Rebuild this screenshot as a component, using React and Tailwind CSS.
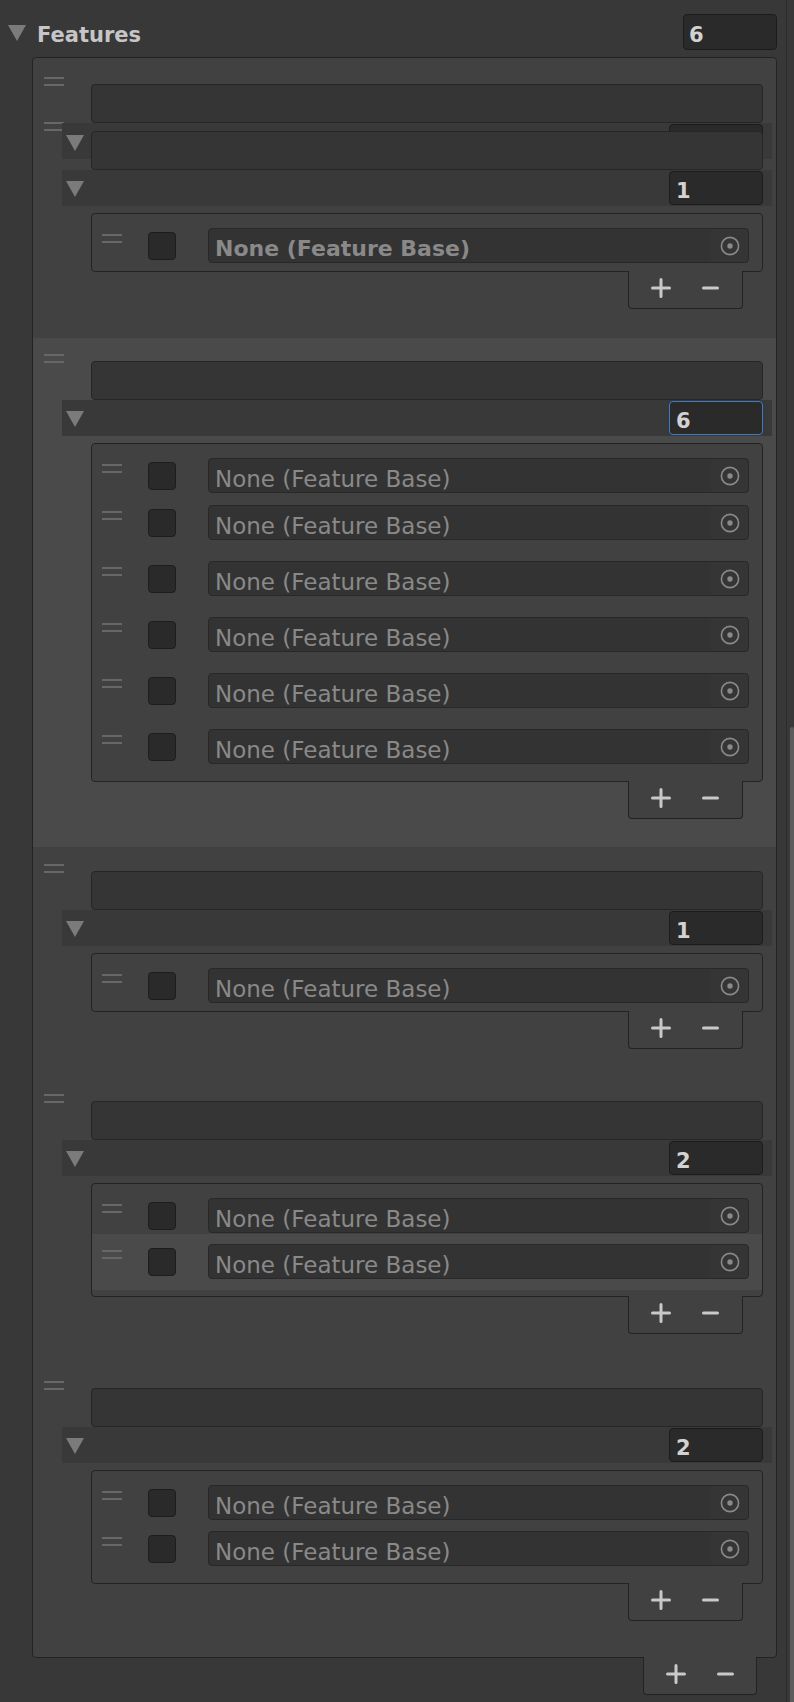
import React from "react";

const Tri = ({ className = "" }) => (
  <svg className={className} width="18" height="16" viewBox="0 0 18 16">
    <polygon points="0,0 18,0 9,16" fill="#7b7b7b" />
  </svg>
);

const Handle = ({ className = "" }) => (
  <div className={`w-[20px] flex flex-col gap-[5px] shrink-0 ${className}`}>
    <div className="h-[2px] bg-[#676767]" />
    <div className="h-[2px] bg-[#676767]" />
  </div>
);

const Plus = () => (
  <svg width="20" height="20" viewBox="0 0 20 20">
    <path d="M10 1.5V18.5M1.5 10H18.5" stroke="#c9c9c9" strokeWidth="3" strokeLinecap="round" />
  </svg>
);
const Minus = () => (
  <svg width="17" height="20" viewBox="0 0 17 20">
    <path d="M1.5 10H15.5" stroke="#c9c9c9" strokeWidth="3" strokeLinecap="round" />
  </svg>
);

const Picker = () => (
  <svg width="20" height="20" viewBox="0 0 20 20">
    <circle cx="10" cy="10" r="8.6" fill="none" stroke="#8a8a8a" strokeWidth="1.6" />
    <circle cx="10" cy="10" r="2.7" fill="#8a8a8a" />
  </svg>
);

const Footer = ({ className = "" }) => (
  <div
    className={`relative z-10 mt-[-1px] h-[38px] bg-[#414141] border-x border-b border-[#232323] rounded-b-[4px] flex items-center pb-[3px] ${className}`}
  >
    <div className="ml-[22px] flex"><Plus /></div>
    <div className="ml-[31px] flex"><Minus /></div>
  </div>
);

const Row = ({ bold = false }) => (
  <div className="flex items-start h-[35px] pl-[10px] pr-[13px]">
    <Handle className="mt-[6px]" />
    <div className="ml-[26px] mt-[4px] w-[28px] h-[28px] bg-[#2a2a2a] border border-[#1d1d1d] rounded-[4px] shrink-0" />
    <div className="ml-[32px] flex-1 h-[35px] box-border bg-[#333333] border border-[#282828] rounded-[4px] flex">
      <div
        className={`flex-1 pl-[6px] leading-[25px] text-[#898989] whitespace-nowrap overflow-hidden ${
          bold ? "pt-[7px] font-bold text-[22px]" : "pt-[8px] text-[23px]"
        }`}
      >
        None (Feature Base)
      </div>
      <div className="w-[37px] h-full flex items-center justify-center bg-[#353535] rounded-r-[4px]">
        <Picker />
      </div>
    </div>
  </div>
);

const CountField = ({ value, focus = false, className = "" }) => (
  <div
    className={`w-[94px] h-[34px] box-border bg-[#2a2a2a] rounded-[4px] border pl-[6px] pt-[7px] leading-[24px] text-[21px] font-bold text-[#d2d2d2] ${
      focus ? "border-[#3b7bc6]" : "border-[#1c1c1c]"
    } ${className}`}
  >
    {value}
  </div>
);

const NameField = ({ className = "" }) => (
  <div
    className={`ml-[29px] mr-[9px] h-[39px] box-border bg-[#353535] border border-[#262626] rounded-[4px] ${className}`}
  />
);

const Foldout = ({ count, focus = false }) => (
  <div className="h-[36px] bg-[#393939] flex items-start">
    <Tri className="ml-[4px] mt-[11px]" />
    <CountField value={count} focus={focus} className="ml-auto mr-[9px] mt-[1px]" />
  </div>
);

const InnerBox = ({ className = "", children }) => (
  <div
    className={`mt-[7px] ml-[29px] mr-[9px] box-border bg-[#414141] border border-[#232323] rounded-[4px] overflow-hidden ${className}`}
  >
    {children}
  </div>
);

export default function App() {
  return (
    <div className="w-[794px] h-[1702px] bg-[#383838] flex font-['DejaVu_Sans',sans-serif] overflow-hidden">
      <div className="w-[786px] shrink-0">
        {/* header */}
        <div className="h-[57px] flex items-start">
          <Tri className="ml-[8px] mt-[25px]" />
          <div className="ml-[11px] mt-[23px] leading-[24px] text-[21px] font-bold text-[#c6c6c6]">Features</div>
          <div className="ml-auto mr-[9px] mt-[14px] w-[94px] h-[36px] box-border bg-[#2a2a2a] border border-[#1c1c1c] rounded-[4px] pl-[5px] pt-[8px] leading-[24px] text-[21px] font-bold text-[#d2d2d2]">
            6
          </div>
        </div>

        {/* container */}
        <div className="ml-[32px] w-[745px] box-border bg-[#414141] border border-[#232323] rounded-[4px]">
          {/* element 0 (overlapping) */}
          <div className="flex pr-[4px] pt-[26px] pb-[29px]">
            <div className="w-[29px] shrink-0 pl-[11px]">
              <Handle className="mt-[-7px]" />
              <Handle className="mt-[36px]" />
            </div>
            <div className="flex-1">
              <NameField />
              <div className="h-[36px] bg-[#393939] flex items-start">
                <Tri className="ml-[4px] mt-[12px]" />
                <CountField value="" className="ml-auto mr-[9px] mt-[1px]" />
              </div>
              <NameField className="relative z-10 mt-[-28px]" />
              <Foldout count="1" />
              <InnerBox className="h-[59px]">
                <div className="mt-[14px]">
                  <Row bold />
                </div>
              </InnerBox>
              <Footer className="ml-auto mr-[29px] w-[115px]" />
            </div>
          </div>

          {/* element 1 (selected) */}
          <div className="flex pr-[4px] pt-[23px] pb-[28px] bg-[#4a4a4a]">
            <div className="w-[29px] shrink-0 pl-[11px]">
              <Handle className="mt-[-7px]" />
            </div>
            <div className="flex-1">
              <NameField />
              <Foldout count="6" focus />
              <InnerBox className="h-[339px]">
                <div className="mt-[14px]"><Row /></div>
                <div className="mt-[12px]"><Row /></div>
                <div className="mt-[21px]"><Row /></div>
                <div className="mt-[21px]"><Row /></div>
                <div className="mt-[21px]"><Row /></div>
                <div className="mt-[21px]"><Row /></div>
              </InnerBox>
              <Footer className="ml-auto mr-[29px] w-[115px]" />
            </div>
          </div>

          {/* element 2 */}
          <div className="flex pr-[4px] pt-[24px] pb-[28px]">
            <div className="w-[29px] shrink-0 pl-[11px]">
              <Handle className="mt-[-7px]" />
            </div>
            <div className="flex-1">
              <NameField />
              <Foldout count="1" />
              <InnerBox className="h-[59px]">
                <div className="mt-[14px]"><Row /></div>
              </InnerBox>
              <Footer className="ml-auto mr-[29px] w-[115px]" />
            </div>
          </div>

          {/* element 3 */}
          <div className="flex pr-[4px] pt-[24px] pb-[28px]">
            <div className="w-[29px] shrink-0 pl-[11px]">
              <Handle className="mt-[-7px]" />
            </div>
            <div className="flex-1">
              <NameField />
              <Foldout count="2" />
              <InnerBox className="h-[114px]">
                <div className="mt-[14px]"><Row /></div>
                <div className="mt-[1px] pt-[10px] pb-[11px] bg-[#4a4a4a]"><Row /></div>
              </InnerBox>
              <Footer className="ml-auto mr-[29px] w-[115px]" />
            </div>
          </div>

          {/* element 4 */}
          <div className="flex pr-[4px] pt-[26px] pb-[36px]">
            <div className="w-[29px] shrink-0 pl-[11px]">
              <Handle className="mt-[-7px]" />
            </div>
            <div className="flex-1">
              <NameField />
              <Foldout count="2" />
              <InnerBox className="h-[114px]">
                <div className="mt-[14px]"><Row /></div>
                <div className="mt-[11px]"><Row /></div>
              </InnerBox>
              <Footer className="ml-auto mr-[29px] w-[115px]" />
            </div>
          </div>
        </div>
        <Footer className="ml-[643px] w-[114px]" />
      </div>
      <div className="w-[1px] shrink-0 bg-[#2b2b2b]" />
      <div className="w-[7px] shrink-0 flex flex-col">
        <div className="h-[727px] shrink-0" />
        <div className="flex-1 ml-[3px] w-[4px] bg-[#5c5c5c] rounded-t-[3px]" />
      </div>
    </div>
  );
}
